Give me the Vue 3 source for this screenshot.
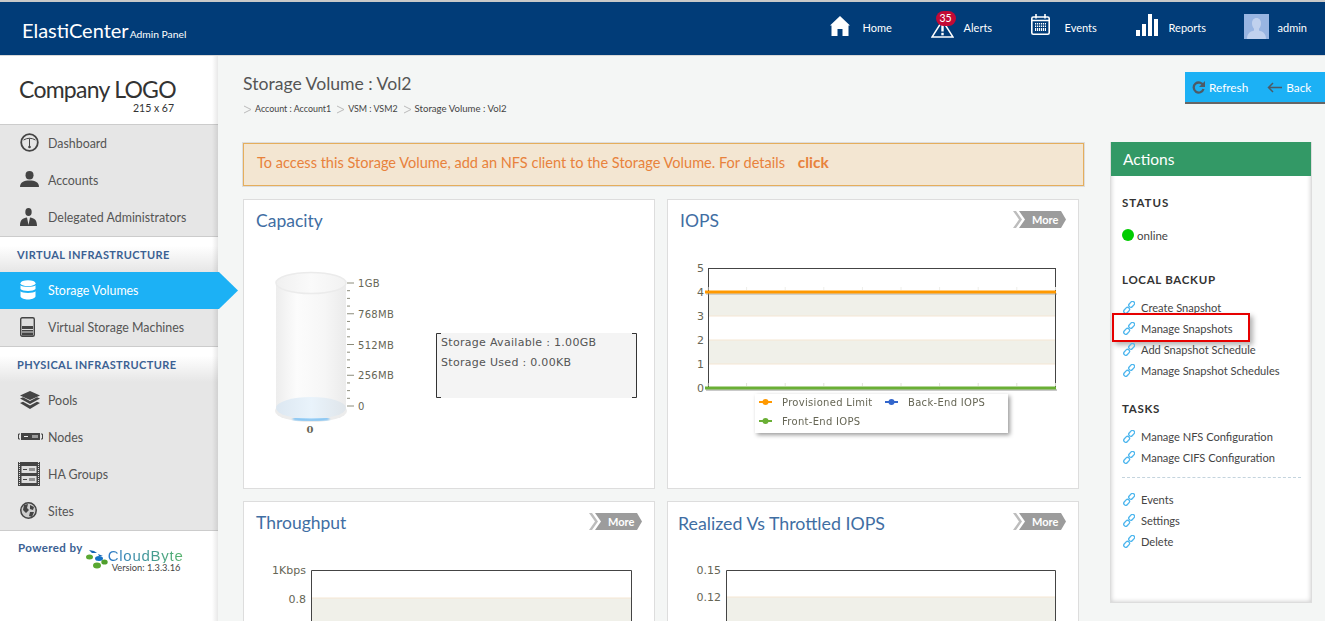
<script setup>
const topNav = [
  { key: 'home', label: 'Home' },
  { key: 'alerts', label: 'Alerts', badge: 35 },
  { key: 'events', label: 'Events' },
  { key: 'reports', label: 'Reports' },
]
const capTicks = []
for (let i = 0; i <= 16; i++) {
  const y = 39 + (i * (162 - 39)) / 16
  capTicks.push({ y, major: i % 4 === 0 })
}
const capLabels = [
  { t: '1GB', y: 43 }, { t: '768MB', y: 74 }, { t: '512MB', y: 105 }, { t: '256MB', y: 135 }, { t: '0', y: 166 },
]
const iopsY = [5, 4, 3, 2, 1, 0]
const iopsTicks = Array.from({ length: 10 }, (_, i) => 40 + i * 38.6)
const sections = [
  { title: 'LOCAL BACKUP', links: ['Create Snapshot', 'Manage Snapshots', 'Add Snapshot Schedule', 'Manage Snapshot Schedules'] },
  { title: 'TASKS', links: ['Manage NFS Configuration', 'Manage CIFS Configuration'] },
]
const extraLinks = ['Events', 'Settings', 'Delete']
</script>

<template>
  <div class="page">
    <header class="top">
      <div class="brand"><span class="brand-name">ElastiCenter</span><span class="brand-sub">Admin Panel</span></div>
      <nav class="top-nav">
        <a v-for="n in topNav" :key="n.key" class="top-item" :class="'ti-' + n.key">
          <svg v-if="n.key === 'home'" width="20" height="20" viewBox="0 0 20 20"><path fill="#fff" d="M10 0 20 9.500 18.500 9.500V20H12.500V13H7.500V20H1.500V9.500H0Z"/></svg>
          <svg v-else-if="n.key === 'alerts'" width="23" height="18" viewBox="0 0 23 18"><path fill="none" stroke="#fff" stroke-width="1.500" d="M11.500 .5 22 17H1Z"/><rect x="10.300" y="4" width="2.400" height="7.500" fill="#fff"/><rect x="10.300" y="12.800" width="2.400" height="2.500" fill="#fff"/></svg>
          <svg v-else-if="n.key === 'events'" width="19" height="21" viewBox="0 0 19 21"><rect x=".8" y="3" width="17.400" height="17.200" rx="1.500" fill="none" stroke="#fff" stroke-width="1.600"/><path stroke="#fff" stroke-width="1.600" d="M1 6.500H18M5 0V4.500M14 0V4.500"/><path stroke="#fff" stroke-width="8" stroke-dasharray="1.200 .8" d="M4 13H15"/><path stroke="#013c78" stroke-width="1" d="M3 11H16M3 13.500H16"/></svg>
          <svg v-else width="22" height="22" viewBox="0 0 22 22"><path fill="#fff" d="M0 16H4V22H0ZM6 10H10V22H6ZM12 0H16V22H12ZM18 5H22V22H18Z"/></svg>
          <span v-if="n.badge" class="badge">{{ n.badge }}</span>
          <span class="top-label">{{ n.label }}</span>
        </a>
        <a class="top-item ti-user">
          <svg width="25" height="25" viewBox="0 0 25 25"><rect width="25" height="25" fill="#98b5e2"/><path fill="#c0d1ee" d="M12.500 4c3 0 4.500 2.400 4.500 5.500 0 2.200-1 4-2 5.200v1.800c2.500 1 7 1.800 7 8.500H3c0-6.700 4.500-7.500 7-8.500v-1.800c-1-1.200-2-3-2-5.200C8 6.400 9.500 4 12.500 4Z"/></svg>
          <span class="top-label">admin</span>
        </a>
      </nav>
    </header>

    <div class="body">
      <aside class="side">
        <div class="logo">
          <div class="logo-main">Company LOGO</div>
          <div class="logo-size">215 x 67</div>
        </div>

        <ul class="menu">
          <li class="menu-item">
            <svg class="mi" width="19" height="19" viewBox="0 0 19 19"><circle cx="9.500" cy="9.500" r="8.300" fill="none" stroke="#444" stroke-width="1.800"/><path fill="none" stroke="#444" d="M3.500 7Q9.500 3.500 15.500 7"/><path stroke="#444" d="M9.500 5.500V13"/><circle cx="9.500" cy="14" r="1.300" fill="#444"/></svg>
            <span>Dashboard</span>
          </li>
          <li class="menu-item">
            <svg class="mi" width="19" height="17" viewBox="0 0 19 17"><ellipse cx="9.500" cy="4.200" rx="4" ry="4.200" fill="#444"/><path fill="#444" d="M0 16C0 11 4 9.500 9.500 9.500S19 11 19 16Z"/></svg>
            <span>Accounts</span>
          </li>
          <li class="menu-item">
            <svg class="mi" width="17" height="18" viewBox="0 0 17 18"><ellipse cx="8.500" cy="4" rx="3.200" ry="4" fill="#444"/><path fill="#444" d="M0 18C0 11.500 3 10 7 9.500L8.500 17 10 9.500C14 10 17 11.500 17 18Z"/></svg>
            <span>Delegated Administrators</span>
          </li>
        </ul>

        <h3 class="side-head">VIRTUAL INFRASTRUCTURE</h3>
        <ul class="menu menu-flat">
          <li class="menu-item active">
            <svg class="mi" width="16" height="20" viewBox="0 0 16 20"><ellipse cx="8" cy="3.200" rx="7.500" ry="3" fill="#fff"/><path fill="#fff" d="M.5 5.200C2 7.500 14 7.500 15.500 5.200V9C14 11.500 2 11.500 .5 9ZM.5 11.200C2 13.500 14 13.500 15.500 11.200V16.500C14 20.500 2 20.500 .5 16.500Z"/></svg>
            <span>Storage Volumes</span>
          </li>
          <li class="menu-item">
            <svg class="mi" width="15" height="20" viewBox="0 0 15 20"><rect x=".7" y=".7" width="13.600" height="18.600" rx="1.500" fill="#ddd" stroke="#444" stroke-width="1.400"/><rect x="2" y="9" width="11" height="3" fill="#444"/><rect x="2" y="13" width="11" height="1.500" fill="#444"/><rect x="2" y="15.500" width="11" height="3" fill="#444"/></svg>
            <span>Virtual Storage Machines</span>
          </li>
        </ul>

        <h3 class="side-head">PHYSICAL INFRASTRUCTURE</h3>
        <ul class="menu menu-flat menu-end">
          <li class="menu-item">
            <svg class="mi" width="20" height="18" viewBox="0 0 20 18"><path fill="#444" d="M10 0 20 4.500 10 9 0 4.500ZM0 7.500 3 6.300 10 10 17 6.300 20 7.500 10 13ZM0 12 3 10.800 10 14.500 17 10.800 20 12 10 18Z"/></svg>
            <span>Pools</span>
          </li>
          <li class="menu-item item-nodes">
            <svg class="mi" width="25" height="7" viewBox="0 0 25 7"><rect x="3" y="0" width="19" height="7" fill="#444"/><path stroke="#444" fill="none" d="M2 1H.5V6H2M23 1H24.500V6H23"/><path stroke="#eee" d="M6 3.500H10M15 2V5M17 2V5M19 2V5"/></svg>
            <span>Nodes</span>
          </li>
          <li class="menu-item item-ha">
            <svg class="mi" width="22" height="24" viewBox="0 0 22 24"><rect width="22" height="24" fill="#444"/><path stroke="#ddd" stroke-dasharray="1 1" d="M1.500 0V24M20.500 0V24"/><rect x="3.500" y="4" width="15" height="7" fill="#ddd"/><rect x="3.500" y="14" width="15" height="7" fill="#ddd"/><path stroke="#444" d="M5 7.500H9M12 6V9M14 6V9M16 6V9M5 17.500H9M12 16V19M14 16V19M16 16V19"/></svg>
            <span>HA Groups</span>
          </li>
          <li class="menu-item">
            <svg class="mi" width="17" height="17" viewBox="0 0 17 17"><circle cx="8.500" cy="8.500" r="7.700" fill="#ccc" stroke="#444" stroke-width="1.500"/><path fill="#444" d="M4 3 8 2 7 6 9 8 6 11 3 8ZM10 3 14 5 13 8 10 7ZM10 10 14 10 12 15 9 14Z"/></svg>
            <span>Sites</span>
          </li>
        </ul>

        <div class="powered">
          <span class="powered-label">Powered by</span>
          <svg class="cb-hex" width="22" height="20" viewBox="0 0 22 20"><path fill="#1565b5" d="M3 1 8 2 11 4 6 4ZM12 5 17 7 13 7 Z"/><ellipse cx="13" cy="9.500" rx="4" ry="2.500" fill="#1572c5"/><ellipse cx="3.500" cy="8" rx="3.500" ry="2.500" fill="#5aa832"/><ellipse cx="18.500" cy="13" rx="3.200" ry="2.600" fill="#4f9f2c"/><ellipse cx="11" cy="16.500" rx="4" ry="3" fill="#5aa832"/></svg>
          <div class="cb-text">
            <div class="cb-name">CloudByte</div>
            <div class="cb-ver">Version: 1.3.3.16</div>
          </div>
        </div>
      </aside>

      <main class="main">
        <div class="head">
          <div>
            <h1 class="title">Storage Volume : Vol2</h1>
            <div class="crumbs">
              <svg width="9" height="9" viewBox="0 0 9 9"><path d="M1 1 8 4.500 1 8" fill="none" stroke="#bbb"/></svg><span>Account : Account1</span>
              <svg width="9" height="9" viewBox="0 0 9 9"><path d="M1 1 8 4.500 1 8" fill="none" stroke="#bbb"/></svg><span>VSM : VSM2</span>
              <svg width="9" height="9" viewBox="0 0 9 9"><path d="M1 1 8 4.500 1 8" fill="none" stroke="#bbb"/></svg><span class="crumb-last">Storage Volume : Vol2</span>
            </div>
          </div>
          <div class="btns">
            <a class="btn">
              <svg width="13" height="13" viewBox="0 0 13 13"><path d="M11.300 4.500A5 5 0 1 0 11.500 8" fill="none" stroke="#4d5a66" stroke-width="2.300"/><path d="M13 0V6H7Z" fill="#4d5a66"/></svg>
              Refresh
            </a>
            <a class="btn">
              <svg width="15" height="11" viewBox="0 0 15 11"><path d="M15 5.500H2M6 1 1.500 5.500 6 10" fill="none" stroke="#4d5a66" stroke-width="1.500"/></svg>
              Back
            </a>
          </div>
        </div>

        <div class="content">
          <div class="col">
            <div class="alert">To access this Storage Volume, add an NFS client to the Storage Volume. For details <b>click</b></div>
            <div class="cards">
              <section class="card">
                <h2 class="card-title">Capacity</h2>
                <svg class="chart" width="410" height="244" viewBox="0 0 410 244">
                  <defs>
                    <linearGradient id="cyl" x1="0" x2="1" y1="0" y2="0">
                      <stop offset="0" stop-color="#ededed"/><stop offset=".3" stop-color="#fcfcfc"/><stop offset=".7" stop-color="#f6f6f6"/><stop offset="1" stop-color="#ebebeb"/>
                    </linearGradient>
                    <linearGradient id="cylBase" x1="0" x2="1" y1="0" y2="0">
                      <stop offset="0" stop-color="#dce7f1"/><stop offset=".5" stop-color="#e9f3fb"/><stop offset="1" stop-color="#dfe5ea"/>
                    </linearGradient>
                    <linearGradient id="cylTop" x1="0" x2="1" y1="0" y2="0">
                      <stop offset="0" stop-color="#f0f0f0"/><stop offset=".5" stop-color="#fafafa"/><stop offset="1" stop-color="#f2f2f2"/>
                    </linearGradient>
                    <filter id="soft"><feGaussianBlur stdDeviation=".8"/></filter>
                  </defs>
                  <ellipse cx="67" cy="167" rx="36" ry="11" fill="#ececec"/>
                  <rect x="32" y="39" width="70" height="126" fill="url(#cyl)"/>
                  <ellipse cx="67" cy="164" rx="35" ry="11" fill="url(#cylBase)"/>
                  <path d="M49 174.500Q67 177.500 85 174.500" fill="none" stroke="#58b4f6" stroke-width="2" filter="url(#soft)"/>
                  <ellipse cx="67" cy="39" rx="35" ry="10.500" fill="url(#cylTop)" stroke="#ebebeb" stroke-width="1.500"/>
                  <g stroke="#8c8c7c">
                    <line v-for="t in capTicks" :key="t.y" x1="103" :x2="t.major ? 110 : 106" :y1="t.y" :y2="t.y"/>
                  </g>
                  <text v-for="l in capLabels" :key="l.t" class="tx" x="114" :y="l.y">{{ l.t }}</text>
                  <text class="tx-b" x="66" y="189" text-anchor="middle">0</text>
                  <rect x="192" y="89" width="201" height="65" fill="#f4f4f4"/>
                  <path d="M197 89.500H192.500V153.500H197M388 89.500H392.500V153.500H388" fill="none" stroke="#333"/>
                  <text class="tx-info" x="197" y="102">Storage Available : 1.00GB</text>
                  <text class="tx-info" x="197" y="122">Storage Used : 0.00KB</text>
                </svg>
              </section>

              <section class="card">
                <h2 class="card-title">IOPS</h2>
                <a class="more"><svg width="53" height="17" viewBox="0 0 53 17"><path fill="#bdbdbd" d="M0 0H3L9 8.500 3 17H0L6 8.500Z"/><path fill="#9c9c9c" d="M6 0H48L53 8.500 48 17H6L12 8.500Z"/></svg><span>More</span></a>
                <svg class="chart" width="410" height="244" viewBox="0 0 410 244">
                  <rect x="40" y="48" width="347" height="24" fill="#f0f0e9"/>
                  <rect x="40" y="96" width="347" height="24" fill="#f0f0e9"/>
                  <path d="M40 72H387M40 96H387M40 120H387" stroke="#f5e6d3"/>
                  <rect x="40.500" y="24.500" width="347" height="120" fill="none" stroke="#444"/>
                  <line v-for="x in iopsTicks" :key="x" :x1="x" :x2="x" y1="43" y2="46" stroke="#eeeeea"/>
                  <line v-for="x in iopsTicks" :key="'b' + x" :x1="x" :x2="x" y1="139" y2="142" stroke="#e2e2da"/>
                  <text v-for="(v, i) in iopsY" :key="v" class="tx-l" x="36" :y="28 + i * 24" text-anchor="end">{{ v }}</text>
                  <line x1="38" x2="389" y1="50" y2="50" stroke="#999" stroke-width="1.500" opacity=".5"/>
                  <line x1="37" x2="388" y1="48" y2="48" stroke="#f90" stroke-width="3"/>
                  <line x1="38" x2="389" y1="146" y2="146" stroke="#888" stroke-width="1.500" opacity=".6"/>
                  <line x1="37" x2="388" y1="144" y2="144" stroke="#6aaf35" stroke-width="3"/>
                  <g class="legend">
                    <rect x="87" y="150" width="253" height="39" fill="#fff"/>
                    <path d="M91 158H104" stroke="#f90" stroke-width="2"/><circle cx="97.500" cy="158" r="3" fill="#f90"/>
                    <path d="M217 158H230" stroke="#3366cc" stroke-width="2"/><circle cx="223.500" cy="158" r="3" fill="#3366cc"/>
                    <path d="M91 177H104" stroke="#6aaf35" stroke-width="2"/><circle cx="97.500" cy="177" r="3" fill="#6aaf35"/>
                    <text class="tx" x="114" y="162">Provisioned Limit</text>
                    <text class="tx" x="240" y="162">Back-End IOPS</text>
                    <text class="tx" x="114" y="181">Front-End IOPS</text>
                  </g>
                </svg>
              </section>

              <section class="card">
                <h2 class="card-title">Throughput</h2>
                <a class="more"><svg width="53" height="17" viewBox="0 0 53 17"><path fill="#bdbdbd" d="M0 0H3L9 8.500 3 17H0L6 8.500Z"/><path fill="#9c9c9c" d="M6 0H48L53 8.500 48 17H6L12 8.500Z"/></svg><span>More</span></a>
                <svg class="chart" width="410" height="244" viewBox="0 0 410 244">
                  <rect x="67" y="52" width="320" height="40" fill="#f0f0e9"/>
                  <path d="M67 52H387" stroke="#f5e6d3"/>
                  <path d="M67.500 100V24.500H387.500V100" fill="none" stroke="#444"/>
                  <text class="tx-l" x="62" y="28" text-anchor="end">1Kbps</text>
                  <text class="tx-l" x="62" y="57" text-anchor="end">0.8</text>
                </svg>
              </section>

              <section class="card card-r">
                <h2 class="card-title">Realized Vs Throttled IOPS</h2>
                <a class="more"><svg width="53" height="17" viewBox="0 0 53 17"><path fill="#bdbdbd" d="M0 0H3L9 8.500 3 17H0L6 8.500Z"/><path fill="#9c9c9c" d="M6 0H48L53 8.500 48 17H6L12 8.500Z"/></svg><span>More</span></a>
                <svg class="chart" width="410" height="244" viewBox="0 0 410 244">
                  <rect x="58" y="51" width="329" height="40" fill="#f0f0e9"/>
                  <path d="M58 51H387" stroke="#f5e6d3"/>
                  <path d="M58.500 100V24.500H387.500V100" fill="none" stroke="#444"/>
                  <text class="tx-l" x="53" y="28" text-anchor="end">0.15</text>
                  <text class="tx-l" x="53" y="55" text-anchor="end">0.12</text>
                </svg>
              </section>
            </div>
          </div>

          <aside class="actions">
            <div class="act-head">Actions</div>
            <div class="act-body">
              <h4 class="act-title first">STATUS</h4>
              <div class="status"><i class="dot"></i>online</div>
              <template v-for="s in sections" :key="s.title">
                <h4 class="act-title">{{ s.title }}</h4>
                <ul class="links">
                  <li v-for="l in s.links" :key="l" class="link" :class="{ marked: l === 'Manage Snapshots' }">
                    <svg width="12" height="13" viewBox="0 0 12 13"><g fill="none" stroke="#4db6ee" stroke-width="1.300"><rect x="-3" y="-2" width="6.500" height="4" rx="1.800" transform="translate(3.500 9.500) rotate(-48)"/><rect x="-3" y="-2" width="6.500" height="4" rx="1.800" transform="translate(8.500 3.500) rotate(-48)"/></g></svg>
                    <span>{{ l }}</span>
                  </li>
                </ul>
              </template>
              <div class="dash"></div>
              <ul class="links links-extra">
                <li v-for="l in extraLinks" :key="l" class="link">
                  <svg width="12" height="13" viewBox="0 0 12 13"><g fill="none" stroke="#4db6ee" stroke-width="1.300"><rect x="-3" y="-2" width="6.500" height="4" rx="1.800" transform="translate(3.500 9.500) rotate(-48)"/><rect x="-3" y="-2" width="6.500" height="4" rx="1.800" transform="translate(8.500 3.500) rotate(-48)"/></g></svg>
                  <span>{{ l }}</span>
                </li>
              </ul>
            </div>
          </aside>
        </div>
      </main>
    </div>
  </div>
</template>

<style>
html, body { margin: 0; padding: 0; overflow: hidden; }
</style>

<style scoped>
* { box-sizing: border-box; }
.page {
  width: 1325px; height: 621px; overflow: hidden; display: flex; flex-direction: column;
  background: #f4f6f5; color: #555;
  font-family: Lato, "Open Sans", "Liberation Sans", sans-serif;
}
.top {
  height: 56px; flex: none; display: flex; align-items: center; justify-content: space-between;
  background: #013c78; border-top: 2px solid #c9c9c9; border-bottom: 1px solid #d8d8d8;
  padding: 0 18px 2px 22px; color: #fff;
}
.brand { display: flex; align-items: baseline; margin-top: 4px; }
.brand-name { font-size: 20px; }
.brand-sub { font-size: 10.300px; margin-left: 1px; }
.top-nav { display: flex; align-items: center; gap: 40px; }
.top-item { position: relative; display: flex; align-items: center; font-size: 11px; }
.top-label { display: block; white-space: nowrap; }
.ti-home { gap: 13px; }
.ti-home svg { margin-bottom: 3px; }
.ti-home .top-label { width: 28px; }
.ti-alerts { gap: 10px; }
.ti-alerts svg { margin-top: 3px; }
.ti-alerts .top-label { width: 27px; }
.ti-events { gap: 15px; }
.ti-events svg { margin-bottom: 6px; }
.ti-events .top-label { width: 31px; }
.ti-reports { gap: 11px; }
.ti-reports svg { margin-bottom: 5px; }
.ti-reports .top-label { width: 37px; }
.ti-user { gap: 9px; margin-left: -2px; }
.ti-user svg { margin-bottom: 3px; }
.badge {
  position: absolute; left: 5px; top: -6px; width: 20px; height: 15px; border-radius: 8px;
  background: #c10a35; color: #fff; font-size: 10.500px; text-align: center; line-height: 14px;
}
.body { flex: 1; display: flex; min-height: 0; }

.side { width: 218px; flex: none; background: #fff; position: relative; display: flex; flex-direction: column; }
.side::after {
  content: ""; position: absolute; top: 0; bottom: 0; right: 0; width: 6px; pointer-events: none;
  background: linear-gradient(to right, rgba(0,0,0,0), rgba(0,0,0,.09));
}
.logo { height: 68px; flex: none; background: #fff; padding: 19px 0 0 19px; color: #333; }
.logo-main { font-size: 23px; line-height: 28px; letter-spacing: -.75px; }
.logo-size { font-size: 10.500px; line-height: 11px; margin: 0 0 0 114px; }
.menu { list-style: none; margin: 0; padding: 0; background: #e6e6e6; border-top: 1px solid #ccc; border-bottom: 1px solid #ccc; }
.menu-flat { border-top: 0; }
.menu-end { border-bottom: 1px solid #ccc; }
.menu-item { height: 37px; display: flex; align-items: center; font-size: 12.400px; padding-left: 20px; color: #555; position: relative; }
.menu-item > span { position: absolute; left: 48px; }
.mi { margin-bottom: 2px; }
.item-nodes { padding-left: 18px; }
.item-ha { padding-left: 18px; }
.active { background: #1cb1f5; color: #fff; z-index: 2; margin-right: -1px; }
.active > span { color: #fff; }
.active::after {
  content: ""; position: absolute; left: 100%; top: 0; width: 19px; height: 37px;
  background: #1cb1f5; clip-path: polygon(0 0, 100% 50%, 0 100%);
}
.side-head {
  margin: 0; height: 35px; padding-left: 17px; font-size: 11px; line-height: 36px; letter-spacing: .4px;
  font-weight: 700; color: #3b6193; background: linear-gradient(#fff 25%, #e6e6e6 100%);
}
.powered { display: flex; align-items: flex-start; padding: 10px 0 0 18px; }
.powered-label { font-size: 11.500px; font-weight: 700; color: #3b6193; letter-spacing: .4px; line-height: 14px; }
.cb-hex { margin: 8px 0 0 3px; flex: none; }
.cb-text { margin-top: 8px; }
.cb-name {
  font-family: "Liberation Sans", sans-serif; font-size: 15px; line-height: 14px; letter-spacing: .75px; font-weight: 400;
  background: linear-gradient(to right, #2a78c8, #57b46a); -webkit-background-clip: text; background-clip: text; color: transparent;
}
.cb-ver { font-size: 9.300px; line-height: 10px; color: #444; margin-left: 4px; }

.main { flex: 1; min-width: 0; display: flex; flex-direction: column; padding: 0 13px 0 25px; }
.head { height: 86px; flex: none; display: flex; justify-content: space-between; padding-top: 16px; }
.title { margin: 0; font-size: 17.600px; font-weight: 400; line-height: 24px; color: #555; }
.crumbs { display: flex; align-items: center; margin-top: 7px; font-size: 8.900px; line-height: 12px; color: #444; }
.crumbs svg { margin: 0 3px 0 0; }
.crumbs span { margin-right: 5px; }
.crumbs .crumb-last { font-size: 9.600px; }
.btns {
  display: flex; align-items: center; gap: 19px; height: 32px; width: 140px; margin-right: -13px; padding-left: 7px;
  background: #1cb1f5; border-bottom: 2px solid #666; color: #fff; font-size: 11.800px;
}
.btn { display: flex; align-items: center; gap: 4px; }
.content { flex: 1; display: flex; gap: 26px; min-height: 0; }
.col { flex: 1; min-width: 0; padding-top: 1px; }
.alert {
  height: 43px; line-height: 37px; padding-left: 13px; font-size: 14.550px; color: #e8823c;
  background: #f3e6d2; border: 1px solid #e5ae5c; box-shadow: 0 0 0 1px #ddd;
}
.alert b { margin-left: 9px; font-size: 15.500px; }
.cards { display: grid; grid-template-columns: 412px 412px; grid-auto-rows: 290px; gap: 12px; margin-top: 13px; }
.card { position: relative; background: #fff; border: 1px solid #ddd; }
.card-title { margin: 0; height: 44px; padding: 9px 0 0 12px; font-size: 17.500px; line-height: 24px; font-weight: 400; color: #3f6ea3; }
.card-r .card-title { padding-left: 10px; font-size: 17.800px; }
.more { position: absolute; right: 12px; top: 11px; width: 53px; height: 17px; color: #fff; font-size: 11px; font-weight: 700; }
.more svg { display: block; }
.more span { position: absolute; left: 19px; top: 0; line-height: 17px; }
.chart { display: block; }
.tx { font-family: "DejaVu Sans", sans-serif; font-size: 10px; letter-spacing: .3px; fill: #666655; }
.tx-l { font-family: "DejaVu Sans", sans-serif; font-size: 11px; fill: #666655; }
.tx-b { font-family: "DejaVu Serif", serif; font-size: 10px; font-weight: 700; fill: #666655; }
.tx-info { font-family: "DejaVu Sans", sans-serif; font-size: 11px; letter-spacing: .3px; fill: #555; }
.legend { filter: drop-shadow(2px 2px 2px rgba(0,0,0,.4)); }

.actions { width: 202px; height: 461px; flex: none; background: #fff; border: 1px solid #ddd; box-shadow: inset 0 0 5px rgba(0,0,0,.22); }
.act-head { height: 34px; margin-top: -1px; background: #339966; color: #fff; font-size: 15.500px; line-height: 35px; padding-left: 12px; }
.act-body { padding: 0 10px 0 11px; }
.act-title { margin: 27px 0 0; font-size: 11.500px; font-weight: 700; letter-spacing: .7px; line-height: 16px; color: #333; }
.act-title.first { margin-top: 19px; letter-spacing: 1px; }
.status { display: flex; align-items: center; gap: 3px; margin-top: 14px; height: 20px; font-size: 11.500px; color: #444; }
.dot { width: 12px; height: 12px; border-radius: 50%; background: #00cc00; }
.links { list-style: none; margin: 9px 0 0; padding: 0; }
.links-extra { margin-top: 11px; }
.link { position: relative; height: 21px; display: flex; align-items: center; gap: 6px; font-size: 11.100px; color: #444; padding-left: 1px; }
.marked::after {
  content: ""; position: absolute; left: -10px; top: -5px; width: 134px; height: 25px;
  border: 2px solid #e60000; box-shadow: 3px 3px 5px rgba(0,0,0,.3);
}
.links + .act-title { margin-top: 20px; }
.dash { margin-top: 9px; border-top: 1px dashed #c4d4de; }
</style>
